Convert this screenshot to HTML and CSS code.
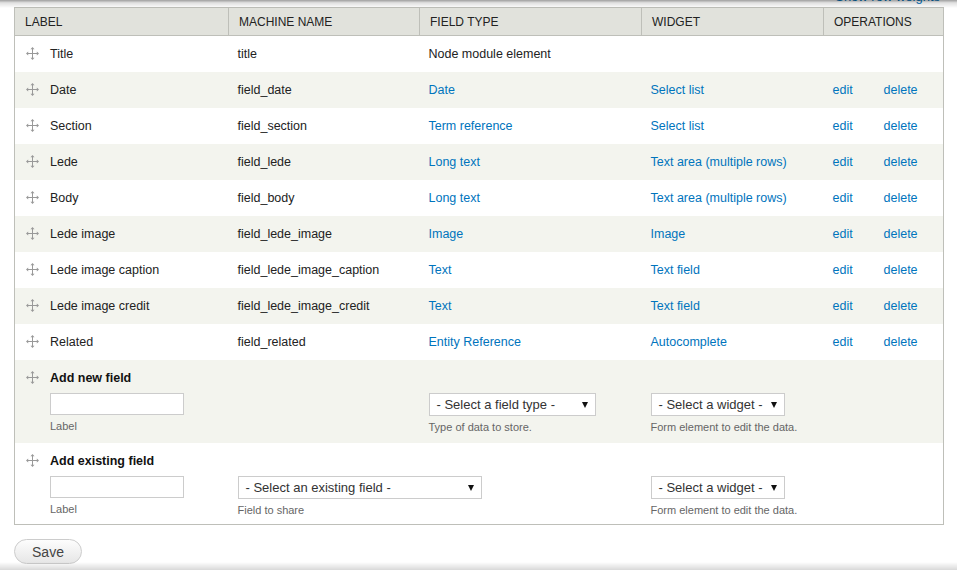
FILE: index.html
```html
<!DOCTYPE html>
<html>
<head>
<meta charset="utf-8">
<link rel="stylesheet" href="styles.css">
</head>
<body>
<div class="page">
  <div class="weights"><a href="#">Show row weights</a></div>
  <table class="fields">
    <colgroup>
      <col class="w-label"><col class="w-machine"><col class="w-type"><col class="w-widget"><col class="w-op"><col class="w-op2">
    </colgroup>
    <thead>
      <tr>
        <th>Label</th>
        <th>Machine name</th>
        <th>Field type</th>
        <th>Widget</th>
        <th colspan="2">Operations</th>
      </tr>
    </thead>
    <tbody>
      <tr class="odd">
        <td><span class="drag"><svg width="13" height="13" viewBox="0 0 13 13"><path d="M6.5 1v11M1 6.5h11" stroke="#999" stroke-width="1"/><path d="M6.5 0l2 2.2h-4zM6.5 13l2-2.2h-4zM0 6.5l2.2 2v-4zM13 6.5l-2.2 2v-4z" fill="#999"/></svg></span>Title</td>
        <td>title</td>
        <td>Node module element</td>
        <td></td>
        <td class="op"></td><td class="op2"></td>
      </tr>
      <tr class="even">
        <td><span class="drag"><svg width="13" height="13" viewBox="0 0 13 13"><path d="M6.5 1v11M1 6.5h11" stroke="#999" stroke-width="1"/><path d="M6.5 0l2 2.2h-4zM6.5 13l2-2.2h-4zM0 6.5l2.2 2v-4zM13 6.5l-2.2 2v-4z" fill="#999"/></svg></span>Date</td>
        <td>field_date</td>
        <td><a href="#">Date</a></td>
        <td><a href="#">Select list</a></td>
        <td class="op"><a href="#">edit</a></td><td class="op2"><a href="#">delete</a></td>
      </tr>
      <tr class="odd">
        <td><span class="drag"><svg width="13" height="13" viewBox="0 0 13 13"><path d="M6.5 1v11M1 6.5h11" stroke="#999" stroke-width="1"/><path d="M6.5 0l2 2.2h-4zM6.5 13l2-2.2h-4zM0 6.5l2.2 2v-4zM13 6.5l-2.2 2v-4z" fill="#999"/></svg></span>Section</td>
        <td>field_section</td>
        <td><a href="#">Term reference</a></td>
        <td><a href="#">Select list</a></td>
        <td class="op"><a href="#">edit</a></td><td class="op2"><a href="#">delete</a></td>
      </tr>
      <tr class="even">
        <td><span class="drag"><svg width="13" height="13" viewBox="0 0 13 13"><path d="M6.5 1v11M1 6.5h11" stroke="#999" stroke-width="1"/><path d="M6.5 0l2 2.2h-4zM6.5 13l2-2.2h-4zM0 6.5l2.2 2v-4zM13 6.5l-2.2 2v-4z" fill="#999"/></svg></span>Lede</td>
        <td>field_lede</td>
        <td><a href="#">Long text</a></td>
        <td><a href="#">Text area (multiple rows)</a></td>
        <td class="op"><a href="#">edit</a></td><td class="op2"><a href="#">delete</a></td>
      </tr>
      <tr class="odd">
        <td><span class="drag"><svg width="13" height="13" viewBox="0 0 13 13"><path d="M6.5 1v11M1 6.5h11" stroke="#999" stroke-width="1"/><path d="M6.5 0l2 2.2h-4zM6.5 13l2-2.2h-4zM0 6.5l2.2 2v-4zM13 6.5l-2.2 2v-4z" fill="#999"/></svg></span>Body</td>
        <td>field_body</td>
        <td><a href="#">Long text</a></td>
        <td><a href="#">Text area (multiple rows)</a></td>
        <td class="op"><a href="#">edit</a></td><td class="op2"><a href="#">delete</a></td>
      </tr>
      <tr class="even">
        <td><span class="drag"><svg width="13" height="13" viewBox="0 0 13 13"><path d="M6.5 1v11M1 6.5h11" stroke="#999" stroke-width="1"/><path d="M6.5 0l2 2.2h-4zM6.5 13l2-2.2h-4zM0 6.5l2.2 2v-4zM13 6.5l-2.2 2v-4z" fill="#999"/></svg></span>Lede image</td>
        <td>field_lede_image</td>
        <td><a href="#">Image</a></td>
        <td><a href="#">Image</a></td>
        <td class="op"><a href="#">edit</a></td><td class="op2"><a href="#">delete</a></td>
      </tr>
      <tr class="odd">
        <td><span class="drag"><svg width="13" height="13" viewBox="0 0 13 13"><path d="M6.5 1v11M1 6.5h11" stroke="#999" stroke-width="1"/><path d="M6.5 0l2 2.2h-4zM6.5 13l2-2.2h-4zM0 6.5l2.2 2v-4zM13 6.5l-2.2 2v-4z" fill="#999"/></svg></span>Lede image caption</td>
        <td>field_lede_image_caption</td>
        <td><a href="#">Text</a></td>
        <td><a href="#">Text field</a></td>
        <td class="op"><a href="#">edit</a></td><td class="op2"><a href="#">delete</a></td>
      </tr>
      <tr class="even">
        <td><span class="drag"><svg width="13" height="13" viewBox="0 0 13 13"><path d="M6.5 1v11M1 6.5h11" stroke="#999" stroke-width="1"/><path d="M6.5 0l2 2.2h-4zM6.5 13l2-2.2h-4zM0 6.5l2.2 2v-4zM13 6.5l-2.2 2v-4z" fill="#999"/></svg></span>Lede image credit</td>
        <td>field_lede_image_credit</td>
        <td><a href="#">Text</a></td>
        <td><a href="#">Text field</a></td>
        <td class="op"><a href="#">edit</a></td><td class="op2"><a href="#">delete</a></td>
      </tr>
      <tr class="odd">
        <td><span class="drag"><svg width="13" height="13" viewBox="0 0 13 13"><path d="M6.5 1v11M1 6.5h11" stroke="#999" stroke-width="1"/><path d="M6.5 0l2 2.2h-4zM6.5 13l2-2.2h-4zM0 6.5l2.2 2v-4zM13 6.5l-2.2 2v-4z" fill="#999"/></svg></span>Related</td>
        <td>field_related</td>
        <td><a href="#">Entity Reference</a></td>
        <td><a href="#">Autocomplete</a></td>
        <td class="op"><a href="#">edit</a></td><td class="op2"><a href="#">delete</a></td>
      </tr>
      <tr class="even add">
        <td>
          <div class="add-title"><span class="drag"><svg width="13" height="13" viewBox="0 0 13 13"><path d="M6.5 1v11M1 6.5h11" stroke="#999" stroke-width="1"/><path d="M6.5 0l2 2.2h-4zM6.5 13l2-2.2h-4zM0 6.5l2.2 2v-4zM13 6.5l-2.2 2v-4z" fill="#999"/></svg></span>Add new field</div>
          <div class="field-item indent"><div class="textbox"></div><div class="desc">Label</div></div>
        </td>
        <td></td>
        <td><div class="field-item"><div class="select sel-type"><span>- Select a field type -</span><span class="arrow"></span></div><div class="desc">Type of data to store.</div></div></td>
        <td><div class="field-item"><div class="select sel-widget"><span>- Select a widget -</span><span class="arrow"></span></div><div class="desc">Form element to edit the data.</div></div></td>
        <td class="op"></td><td class="op2"></td>
      </tr>
      <tr class="odd add last">
        <td>
          <div class="add-title"><span class="drag"><svg width="13" height="13" viewBox="0 0 13 13"><path d="M6.5 1v11M1 6.5h11" stroke="#999" stroke-width="1"/><path d="M6.5 0l2 2.2h-4zM6.5 13l2-2.2h-4zM0 6.5l2.2 2v-4zM13 6.5l-2.2 2v-4z" fill="#999"/></svg></span>Add existing field</div>
          <div class="field-item indent"><div class="textbox"></div><div class="desc">Label</div></div>
        </td>
        <td colspan="2"><div class="field-item"><div class="select sel-existing"><span>- Select an existing field -</span><span class="arrow"></span></div><div class="desc">Field to share</div></div></td>
        <td><div class="field-item"><div class="select sel-widget"><span>- Select a widget -</span><span class="arrow"></span></div><div class="desc">Form element to edit the data.</div></div></td>
        <td class="op"></td><td class="op2"></td>
      </tr>
    </tbody>
  </table>
  <div class="actions"><button class="save" type="button">Save</button></div>
</div>
</body>
</html>
```
FILE: styles.css
```css
html, body {
  margin: 0;
  padding: 0;
  background: #fff;
}
body {
  font-family: "Liberation Sans", Arial, sans-serif;
  font-size: 12.5px;
  color: #333;
}
body::before,
body::after {
  content: "";
  position: fixed;
  left: 0;
  right: 0;
  height: 8px;
  pointer-events: none;
  z-index: 5;
}
body::before {
  top: 0;
  background: linear-gradient(to bottom, rgba(0,0,0,0.38), rgba(0,0,0,0.12) 35%, rgba(0,0,0,0));
}
body::after {
  bottom: 0;
  background: linear-gradient(to top, rgba(0,0,0,0.15), rgba(0,0,0,0));
}
.page {
  padding: 0 14px;
}
a {
  color: #0074bd;
  text-decoration: none;
}
.weights {
  text-align: right;
  margin-top: -11px;
  height: 15px;
  line-height: 15px;
  margin-bottom: 3px;
  padding-right: 3px;
  font-size: 13px;
}
.fields {
  width: 929px;
  border-collapse: collapse;
  border: 1px solid #bebfb9;
  table-layout: fixed;
}
.w-label { width: 214px; }
.w-machine { width: 191px; }
.w-type { width: 222px; }
.w-widget { width: 182px; }
.w-op { width: 50px; }
.w-op2 { width: 70px; }
.fields th {
  background: #e1e2dc;
  border: 1px solid #bebfb9;
  font-weight: normal;
  text-transform: uppercase;
  text-align: left;
  font-size: 12px;
  color: #222;
  height: 27px;
  padding: 0 10px;
}
.fields td {
  padding: 0 9px;
  height: 36px;
  vertical-align: middle;
  color: #222;
  border: 0;
}
.fields td:first-child {
  padding-left: 11px;
}
.fields td.op {
  padding: 0 0 0 9px;
}
.fields td.op2 {
  padding: 0 0 0 10px;
}
tr.odd td { background: #fff; }
tr.even td { background: #f3f4ee; }
.drag {
  display: inline-block;
  width: 24px;
  vertical-align: -2px;
}
.drag svg { display: block; }
tr.add td {
  vertical-align: top;
  height: auto;
}
tr.add td:first-child { padding-top: 10px; }
.add-title {
  font-weight: bold;
  color: #111;
  height: 16px;
  line-height: 16px;
}
.field-item {
  padding-top: 33px;
  padding-bottom: 9px;
}
tr.last .field-item {
  padding-bottom: 7px;
}
.field-item.indent {
  padding-top: 7px;
  padding-left: 24px;
}
.textbox {
  width: 132px;
  height: 20px;
  border: 1px solid #ccc;
  background: #fff;
}
.desc {
  font-size: 11px;
  color: #666;
  margin-top: 4px;
  line-height: 14px;
}
.select {
  display: flex;
  align-items: center;
  justify-content: space-between;
  box-sizing: border-box;
  height: 23px;
  border: 1px solid #ccc;
  background: #fff;
  padding: 0 7px 0 7px;
  color: #333;
  font-size: 13px;
}
.sel-type { width: 167px; }
.sel-widget { width: 134px; }
.sel-existing { width: 244px; }
.arrow {
  width: 0;
  height: 0;
  border-left: 3px solid transparent;
  border-right: 3px solid transparent;
  border-top: 6px solid #111;
}
.actions {
  padding-top: 14px;
}
.save {
  font-family: "Liberation Sans", Arial, sans-serif;
  font-size: 14px;
  color: #444;
  width: 68px;
  height: 25px;
  border: 1px solid #ccc;
  border-radius: 13px;
  background: linear-gradient(to bottom, #fdfdfd, #e6e6e6);
  padding: 0;
}
```
